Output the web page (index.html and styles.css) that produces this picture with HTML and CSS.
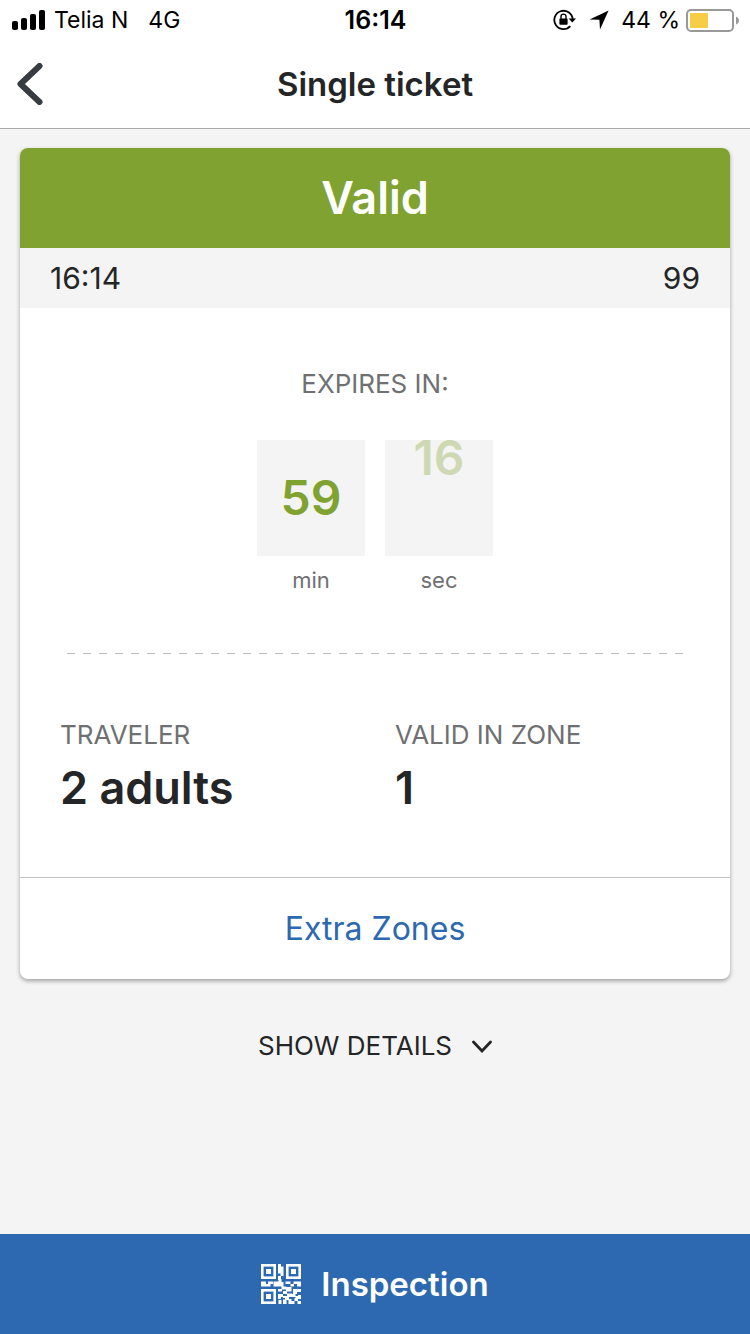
FILE: index.html
```html
<!DOCTYPE html>
<html lang="en">
<head>
    <meta charset="UTF-8">
    <meta name="viewport" content="width=device-width, initial-scale=1.0">
    <title>Single ticket</title>
    <link rel="stylesheet" href="styles.css">
</head>
<body>
    <div class="status-bar">
        <div class="status-left">
            <svg class="signal" width="34" height="20" viewBox="0 0 34 20" aria-hidden="true">
                <rect x="0" y="11" width="6" height="9" rx="2"/>
                <rect x="9" y="8" width="6" height="12" rx="2"/>
                <rect x="18" y="4" width="6" height="16" rx="2"/>
                <rect x="27" y="0" width="6" height="20" rx="2"/>
            </svg>
            <span>Telia N</span>
            <span class="network">4G</span>
        </div>
        <div class="status-time">16:14</div>
        <div class="status-right">
            <svg width="24" height="22" viewBox="0 0 24 22" aria-hidden="true">
                <path d="M19.7 10.2A9.2 9.2 0 1 0 17.3 17.2" fill="none" stroke="#000" stroke-width="1.8"/>
                <path d="M15.6 9.6h7.4l-3.7 4z"/>
                <rect x="6.4" y="9.6" width="8.2" height="6.2" rx="0.8"/>
                <path d="M8 10V7.6a2.5 2.5 0 0 1 5 0V10" fill="none" stroke="#000" stroke-width="1.4"/>
            </svg>
            <svg class="location" width="20" height="20" viewBox="0 0 20 20" aria-hidden="true">
                <path d="M19.6 0.6L11 19.6L10.4 9.8L0.6 9.4z"/>
            </svg>
            <span>44 %</span>
            <svg class="battery" width="53" height="24" viewBox="0 0 53 24" aria-hidden="true">
                <rect x="1" y="2" width="46" height="21" rx="4" fill="none" stroke="#999" stroke-width="2"/>
                <rect x="4" y="5" width="18" height="15" rx="1" fill="#f8cd46"/>
                <path d="M50 8.5c4 1.5 4 6.5 0 8z" fill="#999"/>
            </svg>
        </div>
    </div>

    <header class="header">
        <button class="back" aria-label="Back">
            <svg width="26" height="42" viewBox="0 0 26 42">
                <path d="M22.500 3L3.500 21L22.500 39" fill="none" stroke="#373b42" stroke-width="6" stroke-linecap="round" stroke-linejoin="round"/>
            </svg>
        </button>
        <h1>Single ticket</h1>
    </header>

    <main>
        <section class="ticket">
            <h2 class="ticket-status">Valid</h2>
            <div class="ticket-info">
                <span>16:14</span>
                <span>99</span>
            </div>
            <div class="ticket-body">
                <p class="label">EXPIRES IN:</p>
                <div class="countdown">
                    <div class="unit">
                        <div class="unit-box"><span>59</span></div>
                        <div class="unit-name">min</div>
                    </div>
                    <div class="unit">
                        <div class="unit-box leaving"><span>16</span></div>
                        <div class="unit-name">sec</div>
                    </div>
                </div>
                <div class="divider"></div>
                <dl class="facts">
                    <div>
                        <dt class="label">TRAVELER</dt>
                        <dd>2 adults</dd>
                    </div>
                    <div>
                        <dt class="label">VALID IN ZONE</dt>
                        <dd>1</dd>
                    </div>
                </dl>
            </div>
            <button class="extra-zones">Extra Zones</button>
        </section>

        <button class="details">
            SHOW DETAILS
            <svg width="20" height="14" viewBox="0 0 20 14" aria-hidden="true">
                <path d="M1.5 3L10 12L18.5 3" fill="none" stroke="#242526" stroke-width="2.8" stroke-linecap="round"/>
            </svg>
        </button>
    </main>

    <button class="inspection">
        <svg width="40" height="40" viewBox="0 0 40 40" aria-hidden="true">
            <g fill="none" stroke="#fff" stroke-width="2.6">
                <rect x="1.3" y="1.3" width="12.4" height="12.4"/>
                <rect x="26.3" y="1.3" width="12.4" height="12.4"/>
                <rect x="1.3" y="26.3" width="12.4" height="12.4"/>
            </g>
            <path fill="#fff" d="M5 5h5v5h-5zM30 5h5v5h-5zM5 30h5v5h-5z
                M17 0h3v2.500h2.500v5h-2.500v2h-3zM19.500 7h3v5h-3zM17 12h3v4h-3z
                M0 17.500h5v2.500h2v-2.500h5v2.500h-2.500v2.500h-9.500zM12.500 17.500h5v-2.500h3v3h2v4.500h-10z
                M24.500 17.500h5v2.500h3v-2.500h7.500v5h-4v-2.500h-3v2.500h-3.500v-2.500h-5z
                M17 25h4v2.500h-4zM20.500 22.500h4.500v3h-4.500zM25 23h5.500v4.500h-5.500zM32 25h8v3h-4v2h-4z
                M22 27h4v3h-4zM17 30h5v3h-2v2h-3zM22 32h4v-2.500h5v3.500h-3v3h-4v-2h-2z
                M30.500 30h4v2h3v3h-3v-2h-4zM17.500 36h3v4h-3zM22 35.500h3.500v4.500h-3.500z
                M27.500 35h3v2h3v3h-6zM33.500 34h3.500v3h-3.500zM37 31h3v4h-3zM36.500 37h3.500v3h-3.500z"/>
        </svg>
        Inspection
    </button>
</body>
</html>
```

FILE: styles.css
```css
* {
    box-sizing: border-box;
}
body {
    display: flex;
    flex-direction: column;
    min-height: 100vh;
    margin: 0;
    font-family: Inter, "Liberation Sans", sans-serif;
    color: #242526;
    background-color: #f4f4f4;
}
h1, h2, p, dl, dd {
    margin: 0;
}
button {
    padding: 0;
    border: none;
    background: none;
    font-family: inherit;
    color: inherit;
    cursor: pointer;
}
svg {
    display: block;
    flex: none;
}
.status-bar {
    display: grid;
    grid-template-columns: 1fr auto 1fr;
    align-items: center;
    height: 40px;
    padding: 0 11px 0 12px;
    font-size: 23px;
    color: #000;
    background-color: white;
}
.status-left, .status-right {
    display: flex;
    align-items: center;
}
.status-left {
    gap: 8px;
}
.network {
    margin-left: 12px;
}
.status-time {
    font-size: 25px;
    font-weight: 600;
}
.status-right {
    justify-content: flex-end;
    gap: 12px;
}
.battery {
    margin-left: -6px;
}
.header {
    display: grid;
    grid-template-columns: 1fr auto 1fr;
    align-items: center;
    height: 89px;
    padding: 0 17px;
    border-bottom: 1px solid #a9a9a9;
    background-color: white;
}
.header h1 {
    font-size: 33px;
    font-weight: 600;
}
.back {
    justify-self: start;
}
main {
    flex: 1;
    padding: 19px 20px;
}
.ticket {
    overflow: hidden;
    border-radius: 8px;
    background-color: white;
    box-shadow: 0 2px 4px rgba(0, 0, 0, 0.35);
}
.ticket-status {
    font-size: 45px;
    font-weight: 600;
    line-height: 100px;
    text-align: center;
    color: white;
    background-color: #80a231;
}
.ticket-info {
    display: flex;
    justify-content: space-between;
    padding: 0 30px;
    font-size: 30px;
    line-height: 60px;
    background-color: #f4f4f4;
}
.ticket-body {
    padding: 60px 40px;
}
.label {
    font-size: 26px;
    line-height: 32px;
    color: #6f7072;
}
.ticket-body > .label {
    text-align: center;
}
.countdown {
    display: flex;
    justify-content: center;
    gap: 20px;
    margin-top: 40px;
}
.unit {
    text-align: center;
}
.unit-box {
    width: 108px;
    height: 116px;
    font-size: 48px;
    font-weight: 600;
    line-height: 116px;
    color: #80a231;
    background-color: #f4f4f4;
}
.unit-box.leaving {
    line-height: 36px;
}
.leaving span {
    opacity: 0.32;
}
.unit-name {
    margin-top: 10px;
    font-size: 22px;
    line-height: 28px;
    color: #6f7072;
}
.divider {
    height: 1px;
    margin: 59px 7px 65px;
    background: repeating-linear-gradient(to right, #c0c0c0 0 8px, transparent 8px 16px);
}
.facts {
    display: grid;
    grid-template-columns: 1fr 1fr;
    gap: 40px;
}
.facts dd {
    margin-top: 8px;
    font-size: 45px;
    font-weight: 600;
    line-height: 58px;
}
.extra-zones {
    display: block;
    width: 100%;
    height: 102px;
    border-top: 1px solid #c4c4c4;
    font-size: 32px;
    color: #2c69b0;
}
.details {
    display: flex;
    align-items: center;
    gap: 20px;
    margin: 51px auto 0;
    font-size: 26px;
    line-height: 32px;
}
.inspection {
    display: flex;
    justify-content: center;
    align-items: center;
    gap: 20px;
    height: 100px;
    font-size: 33px;
    font-weight: 600;
    color: white;
    background-color: #2c69b0;
}
```
